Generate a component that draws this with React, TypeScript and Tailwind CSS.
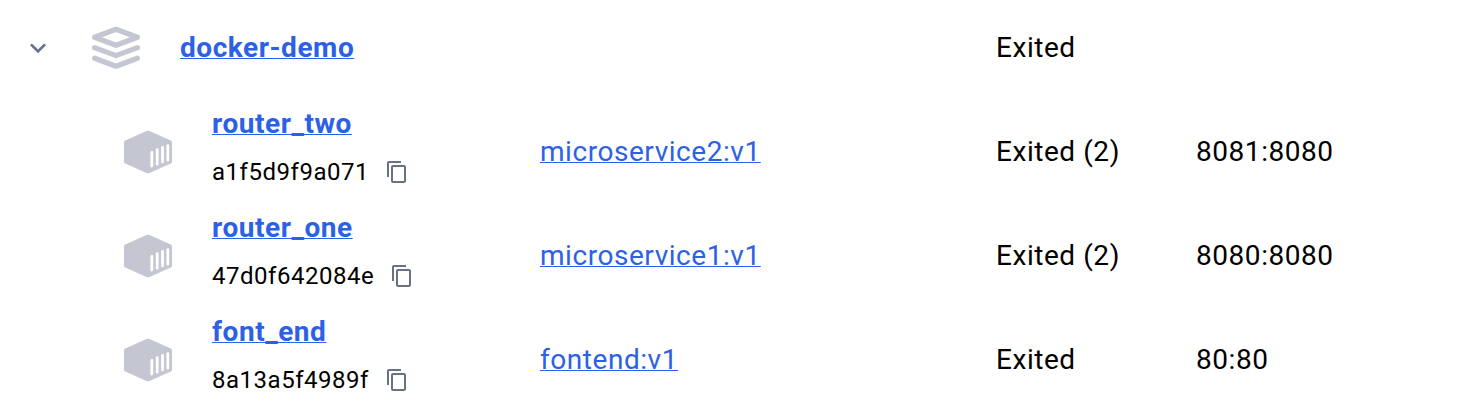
import React from "react";

const containers = [
  { name: "router_two", id: "a1f5d9f9a071", image: "microservice2:v1", status: "Exited (2)", ports: "8081:8080" },
  { name: "router_one", id: "47d0f642084e", image: "microservice1:v1", status: "Exited (2)", ports: "8080:8080" },
  { name: "font_end", id: "8a13a5f4989f", image: "fontend:v1", status: "Exited", ports: "80:80" },
];

function StackIcon() {
  return (
    <svg viewBox="0 0 48 44" className="h-[44px] w-[48px]" fill="none" stroke="#c4c7d2" strokeWidth="5.2" strokeLinejoin="round" strokeLinecap="round">
      <path d="M2.600 11.300 24 3.300l21.400 8L24 19.300Z" />
      <path d="M2.600 21.600 24 29.600l21.400-8" />
      <path d="M2.600 32.200 24 40.200l21.400-8" />
    </svg>
  );
}

function ContainerIcon() {
  return (
    <svg viewBox="0 0 48 44" className="h-[44px] w-[48px]">
      <path d="M22.500 1.100Q24 .5 25.500 1.100L46.800 10.400Q48 11 48 12.400V31.600Q48 33 46.800 33.600L25.500 42.900Q24 43.500 22.500 42.900L1.200 33.600Q0 33 0 31.600V12.400Q0 11 1.200 10.400Z" fill="#c4c7d2" />
      <path d="M27.800 22.400V36M33.200 19.700V34.200M38.500 17.300V31.900M43.800 15.600V30.200" stroke="#fff" strokeWidth="2.800" strokeLinecap="round" />
    </svg>
  );
}

function CopyIcon() {
  return (
    <svg viewBox="0 0 24 24" className="size-6" fill="#677285">
      <path d="M16 1H4c-1.100 0-2 .9-2 2v14h2V3h12V1zm3 4H8c-1.100 0-2 .9-2 2v14c0 1.100.9 2 2 2h11c1.100 0 2-.9 2-2V7c0-1.100-.9-2-2-2zm0 16H8V7h11v14z" />
    </svg>
  );
}

export default function App() {
  return (
    <div className="h-[412px] w-[1474px] overflow-hidden bg-white font-[Roboto,sans-serif] text-[28px] tracking-[0.55px] text-black">
      <div className="grid h-[96px] grid-cols-[92px_88px_816px_1fr] items-center">
        <svg viewBox="0 0 24 24" className="ml-[22px] size-8" fill="#677285">
          <path d="M7.410 8.590 12 13.170l4.590-4.580L18 10l-6 6-6-6z" />
        </svg>
        <StackIcon />
        <a className="font-bold text-[#2c61e6] underline decoration-1">docker-demo</a>
        <span>Exited</span>
      </div>
      {containers.map((c) => (
        <div key={c.name} className="grid h-[104px] grid-cols-[88px_328px_456px_200px_1fr] items-center pl-[124px] pt-2">
          <ContainerIcon />
          <div className="-mt-2 flex flex-col">
            <a className="h-[48px] font-bold leading-[48px] text-[#2c61e6] underline decoration-1">{c.name}</a>
            <div className="flex h-[48px] items-center gap-[16px] text-[24px] tracking-[0.52px]">
              <span>{c.id}</span>
              <CopyIcon />
            </div>
          </div>
          <a className="text-[#2c61e6] underline decoration-1">{c.image}</a>
          <span>{c.status}</span>
          <span>{c.ports}</span>
        </div>
      ))}
    </div>
  );
}
